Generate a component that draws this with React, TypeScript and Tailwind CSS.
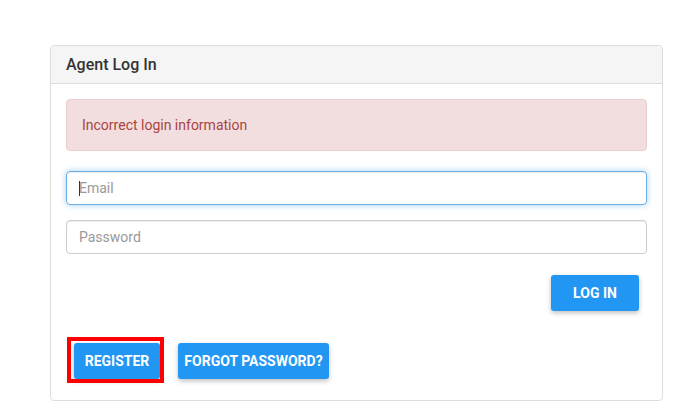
import React from "react";

export default function App() {
  return (
    <div className="min-h-[417px] bg-white pt-[45px] pl-[50px] pr-[14px]" style={{ fontFamily: "Roboto, 'Liberation Sans', sans-serif" }}>
      <div className="w-[613px] rounded-[4px] border border-[#dddddd] bg-white">
        <div className="rounded-t-[4px] border-b border-[#dddddd] bg-[#f5f5f5] px-[15px] py-[10px]">
          <h3 className="text-[16px] leading-[17px] font-medium text-[#333333]">Agent Log In</h3>
        </div>
        <div className="px-[15px] pt-[15px] pb-[21px]">
          <div className="rounded-[4px] border border-[#ebccd1] bg-[#f2dede] px-[15px] py-[15px] text-[14px] leading-[20px] text-[#a94442]">
            Incorrect login information
          </div>
          <div className="relative mt-[20px]">
            <input
              type="text"
              placeholder="Email"
              className="block h-[34px] w-full rounded-[4px] border border-[#66afe9] px-[12px] text-[14px] text-[#555] placeholder:text-[#999999] outline-none shadow-[inset_0_1px_1px_rgba(0,0,0,0.075),0_0_6px_rgba(102,175,233,0.6)]"
            />
            <span className="absolute left-[13px] top-[10px] h-[15px] w-px bg-[#333333]" />
          </div>
          <input
            type="password"
            placeholder="Password"
            className="mt-[15px] block h-[34px] w-full rounded-[4px] border border-[#cccccc] px-[12px] text-[14px] text-[#555] placeholder:text-[#999999] outline-none shadow-[inset_0_1px_1px_rgba(0,0,0,0.075)]"
          />
          <div className="mt-[21px] flex justify-end pr-[8px]">
            <button className="h-[36px] w-[88px] rounded-[3px] bg-[#2196f3] text-[14px] font-bold uppercase text-white shadow-[0_2px_5px_rgba(0,0,0,0.26)]">
              Log In
            </button>
          </div>
          <div className="mt-[32px] flex items-center gap-[18px] pl-[8px]">
            <div className="relative">
              <button className="h-[36px] w-[86px] rounded-[3px] bg-[#2196f3] text-[14px] font-bold uppercase text-white shadow-[0_2px_5px_rgba(0,0,0,0.26)]">
                Register
              </button>
              <span className="pointer-events-none absolute left-[-7px] top-[-6px] h-[46px] w-[97px] border-[4px] border-[#ff0000]" />
            </div>
            <button className="h-[36px] w-[151px] rounded-[3px] bg-[#2196f3] text-[14px] font-bold uppercase text-white shadow-[0_2px_5px_rgba(0,0,0,0.26)]">
              Forgot Password?
            </button>
          </div>
        </div>
      </div>
    </div>
  );
}
